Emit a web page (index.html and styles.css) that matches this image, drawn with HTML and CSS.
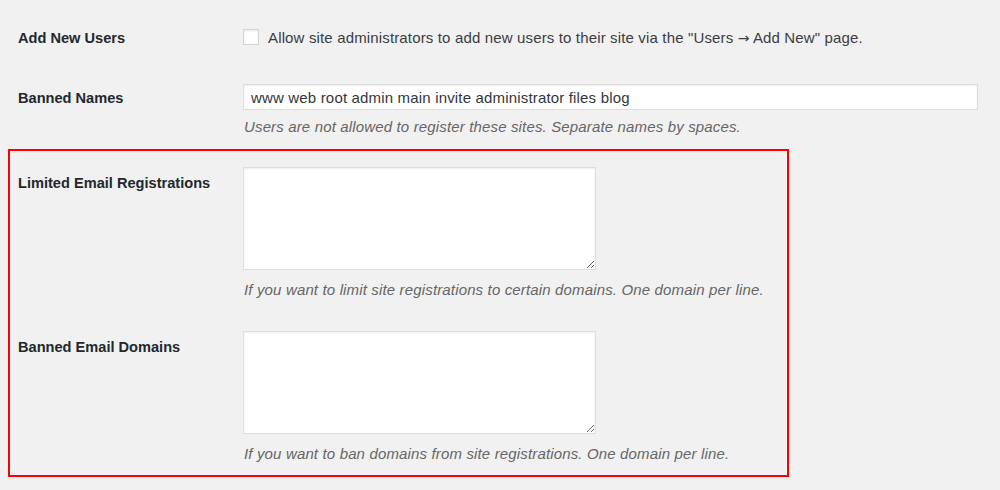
FILE: index.html
```html
<!DOCTYPE html>
<html lang="en">
<head>
<meta charset="utf-8">
<title>Registration Settings</title>
<link rel="stylesheet" href="styles.css">
</head>
<body>
<div class="settings">
  <div class="row row-users">
    <div class="label label-check">Add New Users</div>
    <div class="field">
      <label class="check-line"><input type="checkbox" class="checkbox"><span>Allow site administrators to add new users to their site via the "Users <span class="arrow">→</span> Add New" page.</span></label>
    </div>
  </div>
  <div class="row row-names">
    <div class="label label-input">Banned Names</div>
    <div class="field">
      <input type="text" class="text-input" value="www web root admin main invite administrator files blog">
      <p class="desc desc-input">Users are not allowed to register these sites. Separate names by spaces.</p>
    </div>
  </div>
  <div class="highlight">
    <div class="row row-limited">
      <div class="label label-area">Limited Email Registrations</div>
      <div class="field">
        <textarea class="area"></textarea>
        <p class="desc desc-area">If you want to limit site registrations to certain domains. One domain per line.</p>
      </div>
    </div>
    <div class="row row-banned">
      <div class="label label-area">Banned Email Domains</div>
      <div class="field">
        <textarea class="area"></textarea>
        <p class="desc desc-area">If you want to ban domains from site registrations. One domain per line.</p>
      </div>
    </div>
  </div>
</div>
</body>
</html>
```

FILE: styles.css
```css
html, body {
  margin: 0;
  padding: 0;
  background: #f1f1f1;
}

body {
  font-family: "Liberation Sans", Arial, sans-serif;
  font-size: 15px;
  letter-spacing: 0.15px;
  line-height: 20px;
  color: #3a3d41;
  width: 1000px;
  height: 490px;
  overflow: hidden;
}

.settings {
  padding-top: 28px;
}

.row {
  display: flex;
  padding-left: 18px;
}

.label {
  width: 225px;
  flex: none;
  font-weight: bold;
  font-size: 14.6px;
  letter-spacing: 0;
  color: #23282d;
}

.field {
  flex: none;
}

.check-line {
  display: flex;
  align-items: flex-start;
  gap: 9px;
  color: #3a3d41;
}

.arrow {
  font-family: "DejaVu Sans", sans-serif;
  font-size: 14px;
  line-height: 0;
  letter-spacing: 0;
}

.checkbox {
  -webkit-appearance: none;
  appearance: none;
  width: 16px;
  height: 16px;
  margin: 1px 0 0 0;
  border: 1px solid #d4d4d4;
  background: #fff;
  box-shadow: inset 0 1px 2px rgba(0, 0, 0, 0.1);
  box-sizing: border-box;
  flex: none;
}

.row-names {
  padding-top: 36px;
}

.label-input {
  margin-top: 4px;
}

.text-input {
  display: block;
  box-sizing: border-box;
  width: 735px;
  height: 26px;
  margin: 0;
  padding: 0 7px;
  border: 1px solid #dddddd;
  background: #fff;
  box-shadow: inset 0 1px 2px rgba(0, 0, 0, 0.07);
  font-family: "Liberation Sans", Arial, sans-serif;
  font-size: 15px;
  letter-spacing: 0.17px;
  color: #32373c;
  outline: none;
}

.desc {
  margin: 0;
  font-style: italic;
  color: #666;
  padding-left: 1px;
}

.desc-input {
  margin-top: 7px;
}

.highlight {
  margin-top: 12px;
  margin-left: 8px;
  width: 781px;
  box-sizing: border-box;
  border: 2px solid #ff0000;
  padding-top: 16px;
  padding-bottom: 11px;
}

.highlight .row {
  padding-left: 8px;
}

.label-area {
  margin-top: 6px;
}

.area {
  display: block;
  box-sizing: border-box;
  width: 353px;
  height: 103px;
  margin: 0;
  border: 1px solid #dddddd;
  background: #fff;
  box-shadow: inset 0 1px 2px rgba(0, 0, 0, 0.07);
  font-family: "Liberation Sans", Arial, sans-serif;
  font-size: 14px;
  outline: none;
}

.desc-area {
  margin-top: 10px;
}

.row-banned {
  padding-top: 31px;
}
```
